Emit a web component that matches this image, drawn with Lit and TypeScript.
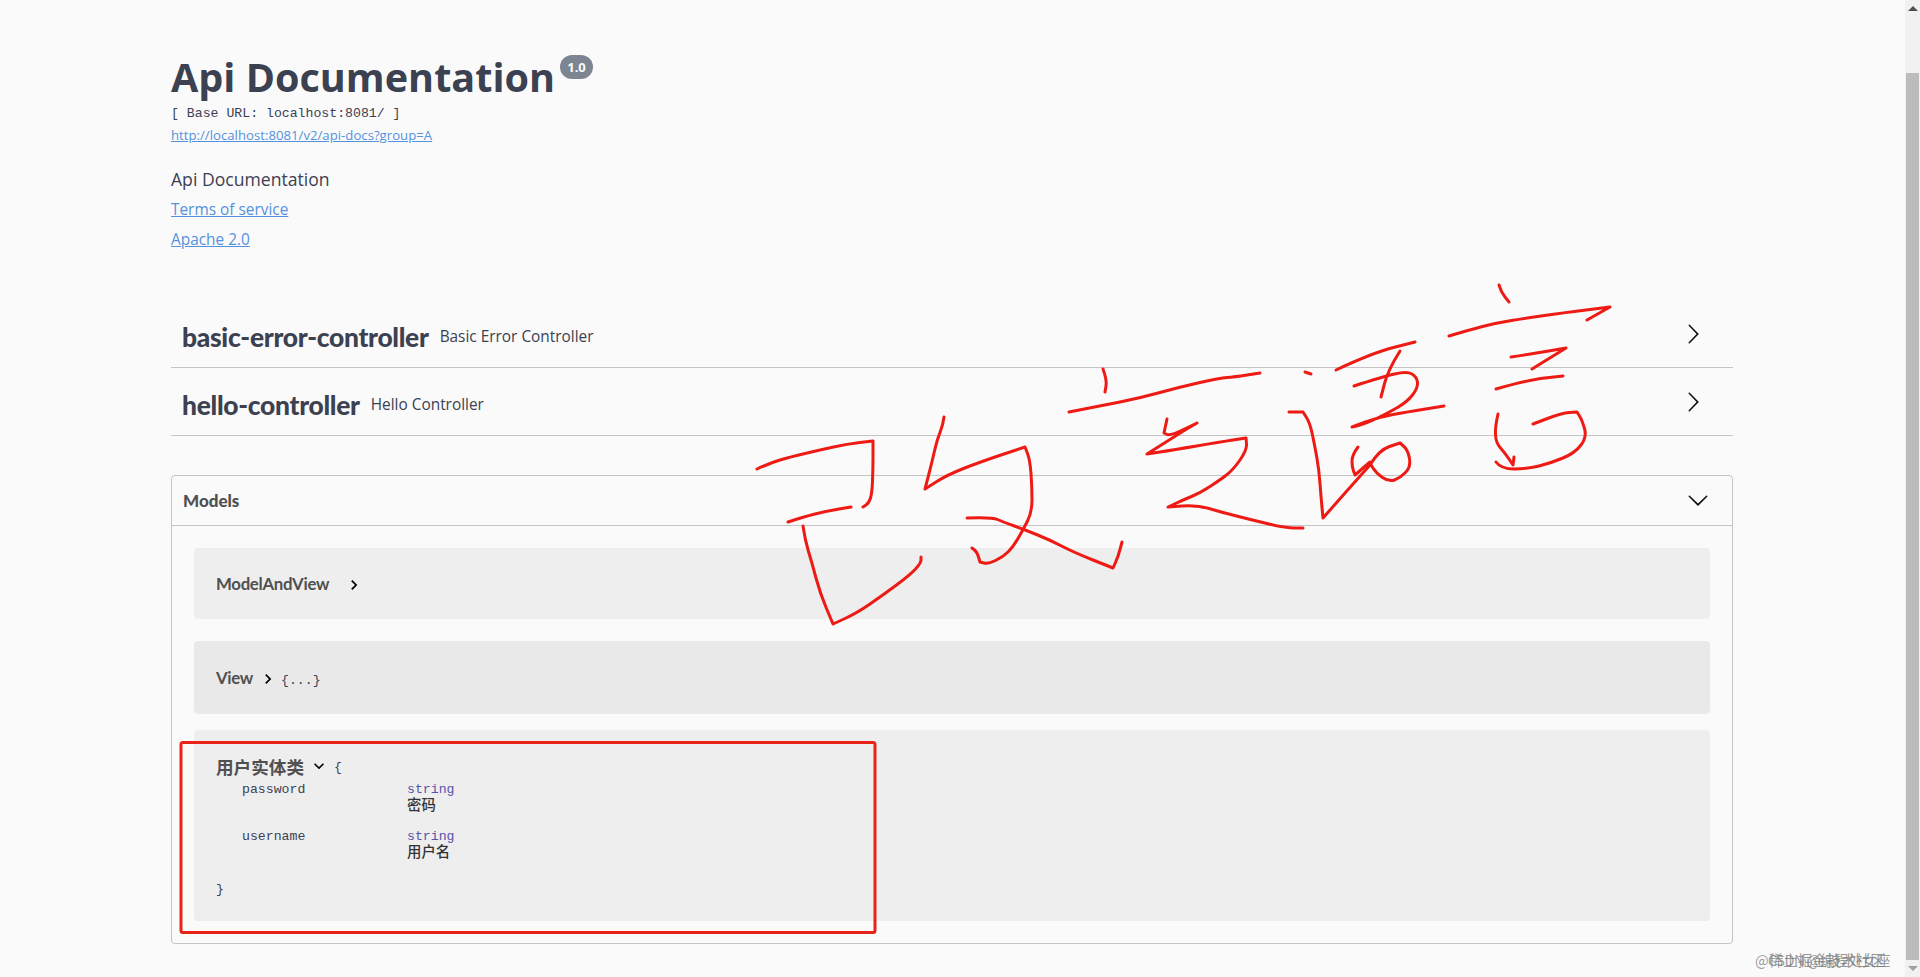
import { LitElement, html, css, svg } from "lit";
import { customElement } from "lit/decorators.js";

const LARGE = "M13.25 10L6.109 2.58a.697.697 0 0 1 0-.979.68.68 0 0 1 .969 0l7.83 7.908a.697.697 0 0 1 0 .979l-7.83 7.908a.68.68 0 0 1-.969 0 .697.697 0 0 1 0-.979L13.25 10z";
const CHEV = "M10 6L8.59 7.41 13.17 12l-4.58 4.59L10 18l6-6z";

const STROKES = [
  "757,469 770,463 790,457 820,450 847,444 873,441 873,470 872,493 869,503 863,507",
  "788,522 803,517 827,511 851,507",
  "803,526 805,540 812,563 820,593 833,624 857,613 883,595 910,575 921,563 921,557",
  "944,417 943,425 937,440 932,462 925,489 947,475 980,462 1025,447 1030,460 1032,487 1032,512 1023,530 1013,547 1003,557 988,564 980,562 977,552 972,548",
  "967,518 992,517 1003,522 1023,529 1050,540 1073,552 1113,568 1118,557 1122,542",
  "1103,369 1107,380 1105,392",
  "1069,412 1100,406 1140,398 1180,387 1220,378 1234,377 1260,373",
  "1167,419 1164,433 1170,436 1197,423 1185,430 1147,454 1173,450 1220,442 1246,438 1247,450 1233,470 1220,480 1200,493 1183,500 1168,507 1197,505 1221,512 1252,520 1286,528 1303,528",
  "1305,372 1311,374",
  "1289,412 1303,412 1310,423 1315,447 1319,470 1321,497 1323,518 1345,493 1370,465",
  "1358,447 1352,455 1352,467 1355,475 1370,462",
  "1370,465 1379,450 1400,443 1408,450 1411,467 1400,478 1389,482 1376,473 1370,463",
  "1336,370 1372,353 1415,342",
  "1400,351 1388,370 1381,397",
  "1354,386 1382,377 1407,371 1417,377 1418,388 1407,402 1388,413 1365,424 1352,427 1379,417 1407,412 1444,406",
  "1499,285 1501,292 1509,302",
  "1449,336 1469,330 1496,323 1527,318 1562,313 1610,307 1587,320",
  "1511,357 1537,353 1566,348 1532,369",
  "1496,389 1527,380 1563,376",
  "1498,414 1495,427 1496,443 1505,453 1513,465 1514,457",
  "1496,462 1501,469 1527,469 1551,463 1575,453 1587,437 1582,420 1577,412 1562,413 1533,424",
];

/* Midpoint-quadratic smoothing; vertices with a sharp turn stay as corners. */
function smooth(points: string): string {
  const p = points.split(" ").map((s) => s.split(",").map(Number));
  let d = `M${p[0][0]} ${p[0][1]}`;
  for (let i = 1; i < p.length - 1; i++) {
    const a = Math.atan2(p[i][1] - p[i - 1][1], p[i][0] - p[i - 1][0]);
    const b = Math.atan2(p[i + 1][1] - p[i][1], p[i + 1][0] - p[i][0]);
    let t = Math.abs(a - b);
    if (t > Math.PI) t = 2 * Math.PI - t;
    const mx = (p[i][0] + p[i + 1][0]) / 2;
    const my = (p[i][1] + p[i + 1][1]) / 2;
    if (t > 1.0) d += `L${p[i][0]} ${p[i][1]}L${mx} ${my}`;
    else d += `Q${p[i][0]} ${p[i][1]} ${mx} ${my}`;
  }
  const l = p[p.length - 1];
  return d + `L${l[0]} ${l[1]}`;
}

@customElement("app-root")
export class AppRoot extends LitElement {
  static styles = css`
    :host { display: block; height: 977px; }
    * { box-sizing: border-box; }
    .page {
      position: relative; display: flex; height: 977px; overflow: hidden;
      background: #fafafa; color: #3b4151; font-family: "Open Sans", sans-serif;
    }
    .main { flex: 1; min-width: 0; padding: 0 172px 0 171px; }
    .info { height: 300px; padding-top: 49px; }
    .title-row { display: flex; align-items: flex-start; height: 56px; }
    h1 { margin: 0; font-size: 39.6px; line-height: 56px; font-weight: 700; color: #3b4151; }
    .badge {
      margin: 6px 0 0 5px; width: 33px; height: 24px; border-radius: 12px; background: #7d8492;
      color: #fafafa; font-size: 13px; font-weight: 700; display: flex; align-items: center; justify-content: center;
    }
    .base { font-family: "Liberation Mono", monospace; font-size: 13.2px; line-height: 18px; color: #3b4151; }
    a { color: #5592dd; text-decoration: underline; display: block; }
    .url { font-size: 13.2px; line-height: 18px; margin-top: 3px; }
    .desc { font-size: 17.6px; line-height: 24px; margin-top: 23px; }
    .lnk { font-size: 15.4px; line-height: 22px; margin-top: 8px; }
    .tag {
      display: flex; align-items: center; height: 68px; padding: 0 11px; border-bottom: 1px solid #c4c4c4;
    }
    .tag-name { font-family: "Lato", sans-serif; font-size: 26.4px; font-weight: 900; letter-spacing: -0.3px; color: #3b4151; margin-top: 6px; }
    .tag-desc { font-size: 15.4px; margin-left: 11px; margin-top: 5px; color: #3b4151; flex: 1; }
    .tag svg { width: 22px; height: 22px; fill: #111; margin: 1px 18px 0 0; }
    .models { margin-top: 39px; height: 469px; border: 1px solid #c4c4c4; border-radius: 4px; }
    .models-head {
      display: flex; align-items: center; justify-content: space-between; height: 50px; padding: 0 23px 0 11px;
      border-bottom: 1px solid #c4c4c4;
    }
    .models-head span { font-family: "Lato", sans-serif; font-weight: 900; font-size: 17px; color: #505050; }
    .models-head svg { width: 22px; height: 22px; fill: #111; transform: rotate(90deg); margin-top: -2px; }
    .models-body { padding: 22px 22px 0; }
    .model { background: #eee; border-radius: 4px; padding: 0 22px; display: flex; align-items: center; }
    .m1 { height: 71px; }
    .m2 { height: 73px; margin-top: 22px; background: #e9e9e9; }
    .m3 { height: 191px; margin-top: 16px; display: block; padding-top: 25px; }
    .mname { font-family: "Lato", "Noto Sans CJK SC", sans-serif; font-weight: 700; font-size: 16.8px; letter-spacing: -0.3px; color: #505050; }
    .m3 .mname { font-size: 17.6px; letter-spacing: 0; }
    .toggle { width: 20px; height: 20px; fill: #000; flex: none; }
    .m1 .toggle { margin: 2px 0 0 15px; }
    .m2 .toggle { margin: 2px 0 0 5px; }
    .mono { font-family: "Liberation Mono", "Noto Sans CJK SC", monospace; font-size: 13.2px; color: #3b4151; }
    .m2 .mono { margin: 5px 0 0 3px; }
    .m3-head { display: flex; align-items: center; height: 22px; }
    .m3-head .toggle { transform: rotate(90deg); margin-left: 5px; }
    .m3-head .mono { margin: 2px 0 0 5px; }
    .props { display: grid; grid-template-columns: 165px auto; justify-content: start; padding: 5px 0 0 26px; }
    .ptype { color: #55a; line-height: 16px; }
    .pdesc { color: #333; line-height: 17px; font-weight: 500; font-size: 14.4px; margin-bottom: 14px; }
    .pname { line-height: 16px; }
    .close { margin-top: 6px; line-height: 16px; }
    .bar { width: 15px; flex: none; background: #f1f1f1; display: flex; flex-direction: column; align-items: center; }
    .up, .down { width: 0; height: 0; border-left: 5px solid transparent; border-right: 5px solid transparent; }
    .up { margin-top: 6px; border-bottom: 5px solid #505050; }
    .thumb { margin-top: 62px; width: 13px; height: 887px; background: #bcbcbc; }
    .down { margin-top: 6px; border-top: 5px solid #a0a0a0; }
    .ink { position: absolute; left: 0; top: 0; width: 1920px; height: 977px; pointer-events: none; }
    .ink path { fill: none; stroke: #ee1a14; stroke-width: 3; stroke-linecap: round; stroke-linejoin: round; }
    .ink rect { fill: none; stroke: #e8231a; stroke-width: 3; }
    .wm { position: absolute; font-size: 14.5px; line-height: 18px; color: rgba(110,110,110,.7); white-space: nowrap; font-family: "Noto Sans CJK SC", sans-serif; }
    .w1 { left: 1755px; top: 951px; }
    .w2 { left: 1768px; top: 951px; letter-spacing: -0.5px; }
  `;

  render() {
    return html`
      <div class="page">
        <div class="main">
          <div class="info">
            <div class="title-row"><h1>Api Documentation</h1><span class="badge">1.0</span></div>
            <div class="base">[ Base URL: localhost:8081/ ]</div>
            <a class="url" href="#">http://localhost:8081/v2/api-docs?group=A</a>
            <div class="desc">Api Documentation</div>
            <a class="lnk" href="#">Terms of service</a>
            <a class="lnk" href="#">Apache 2.0</a>
          </div>
          <div class="tag">
            <span class="tag-name">basic-error-controller</span>
            <span class="tag-desc">Basic Error Controller</span>
            <svg viewBox="0 0 20 20"><path d=${LARGE}></path></svg>
          </div>
          <div class="tag">
            <span class="tag-name">hello-controller</span>
            <span class="tag-desc">Hello Controller</span>
            <svg viewBox="0 0 20 20"><path d=${LARGE}></path></svg>
          </div>
          <div class="models">
            <div class="models-head"><span>Models</span><svg viewBox="0 0 20 20"><path d=${LARGE}></path></svg></div>
            <div class="models-body">
              <div class="model m1">
                <span class="mname">ModelAndView</span>
                <svg class="toggle" viewBox="0 0 24 24"><path d=${CHEV}></path></svg>
              </div>
              <div class="model m2">
                <span class="mname">View</span>
                <svg class="toggle" viewBox="0 0 24 24"><path d=${CHEV}></path></svg>
                <span class="mono">{...}</span>
              </div>
              <div class="model m3">
                <div class="m3-head">
                  <span class="mname">用户实体类</span>
                  <svg class="toggle" viewBox="0 0 24 24"><path d=${CHEV}></path></svg>
                  <span class="mono">{</span>
                </div>
                <div class="props mono">
                  <span class="pname">password</span>
                  <div><div class="ptype">string</div><div class="pdesc">密码</div></div>
                  <span class="pname">username</span>
                  <div><div class="ptype">string</div><div class="pdesc">用户名</div></div>
                </div>
                <div class="mono close">}</div>
              </div>
            </div>
          </div>
        </div>
        <div class="bar"><div class="up"></div><div class="thumb"></div><div class="down"></div></div>
        <svg class="ink" viewBox="0 0 1920 977">
          <rect x="181" y="742.5" width="694" height="190" rx="2"></rect>
          ${STROKES.map((p) => svg`<path d=${smooth(p)}></path>`)}
        </svg>
        <span class="wm w1">@稀土掘金技术社区</span>
        <span class="wm w2">CSDN @编程处女座</span>
      </div>
    `;
  }
}
